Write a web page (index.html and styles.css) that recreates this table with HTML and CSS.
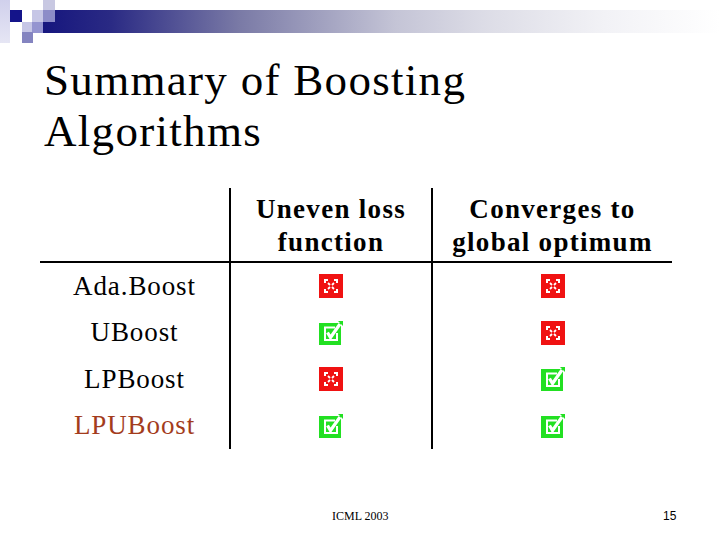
FILE: index.html
```html
<!DOCTYPE html>
<html>
<head>
<meta charset="utf-8">
<link rel="stylesheet" href="styles.css">
</head>
<body>
<div class="slide">
  <svg class="deco" width="720" height="44" viewBox="0 0 720 44">
    <defs>
      <linearGradient id="bar" x1="43" y1="0" x2="720" y2="0" gradientUnits="userSpaceOnUse">
        <stop offset="0" stop-color="#16167e"/>
        <stop offset="0.1" stop-color="#2a2a84"/>
        <stop offset="0.29" stop-color="#7a7aa6"/>
        <stop offset="0.52" stop-color="#c4c4d6"/>
        <stop offset="0.65" stop-color="#dcdce6"/>
        <stop offset="0.83" stop-color="#f2f2f6"/>
        <stop offset="1" stop-color="#ffffff"/>
      </linearGradient>
      <linearGradient id="strip" x1="0" y1="0" x2="0" y2="1">
        <stop offset="0" stop-color="#d0d0ec"/>
        <stop offset="1" stop-color="#e6e6f4"/>
      </linearGradient>
    </defs>
    <rect x="0" y="0" width="10" height="43" fill="url(#strip)"/>
    <rect x="43" y="10" width="677" height="23" fill="url(#bar)"/>
    <rect x="43" y="0" width="12" height="10" fill="#c8c8e2"/>
    <rect x="10" y="10" width="12" height="12" fill="#14148a"/>
    <rect x="32" y="10" width="11" height="12" fill="#c6c6e6"/>
    <rect x="43" y="10" width="12" height="12" fill="#8c8cc8"/>
    <rect x="22" y="22" width="10" height="10" fill="#c6c6e6"/>
    <rect x="32" y="22" width="11" height="11" fill="#9494d0"/>
    <rect x="22" y="32" width="11" height="11" fill="#8484c0"/>
  </svg>

  <h1 class="title">Summary of Boosting<br>Algorithms</h1>

  <div class="table">
    <div class="cell head empty"></div>
    <div class="cell head mid">Uneven loss<br>function</div>
    <div class="cell head">Converges to<br>global optimum</div>

    <div class="cell label">Ada.Boost</div>
    <div class="cell mid"><svg class="ico" viewBox="0 0 24 24"><use href="#no"/></svg></div>
    <div class="cell"><svg class="ico" viewBox="0 0 24 24"><use href="#no"/></svg></div>

    <div class="cell label">UBoost</div>
    <div class="cell mid"><svg class="ico" viewBox="0 0 24 24"><use href="#yes"/></svg></div>
    <div class="cell"><svg class="ico" viewBox="0 0 24 24"><use href="#no"/></svg></div>

    <div class="cell label">LPBoost</div>
    <div class="cell mid"><svg class="ico" viewBox="0 0 24 24"><use href="#no"/></svg></div>
    <div class="cell"><svg class="ico" viewBox="0 0 24 24"><use href="#yes"/></svg></div>

    <div class="cell label accent">LPUBoost</div>
    <div class="cell mid"><svg class="ico" viewBox="0 0 24 24"><use href="#yes"/></svg></div>
    <div class="cell"><svg class="ico" viewBox="0 0 24 24"><use href="#yes"/></svg></div>
  </div>

  <div class="footer">
    <span class="conf">ICML 2003</span>
    <span class="num">15</span>
  </div>

  <svg width="0" height="0" class="defs">
    <defs>
      <g id="no">
        <rect x="0" y="0" width="24" height="24" fill="#f01212"/>
        <path d="M6 9 L6 6 L9 6 M15 6 L18 6 L18 9 M18 15 L18 18 L15 18 M9 18 L6 18 L6 15" fill="none" stroke="#fff" stroke-width="2"/>
        <path d="M9 9 L11 11 M15 9 L13 11 M9 15 L11 13 M15 15 L13 13" stroke="#fff" stroke-width="1.8" fill="none"/>
      </g>
      <g id="yes">
        <rect x="0" y="2" width="22" height="22" fill="#22e022"/>
        <path d="M19 0 L24 0 L24 5 Z" fill="#22e022"/>
        <path d="M16 6.5 L6 6.5 L6 19 L18 19 L18 12" fill="none" stroke="#fff" stroke-width="2"/>
        <path d="M8.5 11.5 L11.5 16.5 L21 3" fill="none" stroke="#fff" stroke-width="3.2"/>
      </g>
    </defs>
  </svg>
</div>
</body>
</html>
```

FILE: styles.css
```css
html, body {
  margin: 0;
  padding: 0;
  background: #ffffff;
}

.slide {
  width: 720px;
  height: 540px;
  position: relative;
  overflow: hidden;
  font-family: "Liberation Serif", "Times New Roman", serif;
  color: #000;
}

.deco {
  display: block;
}

.defs {
  position: absolute;
  width: 0;
  height: 0;
}

.title {
  margin: 11px 0 0 44px;
  font-weight: normal;
  font-size: 45px;
  line-height: 51px;
  letter-spacing: 1.3px;
}

.table {
  margin: 31px 0 0 40px;
  width: 632px;
  display: grid;
  grid-template-columns: 189px 204px 239px;
  grid-template-rows: 75px repeat(4, 46.5px);
}

.cell {
  display: flex;
  align-items: center;
  justify-content: center;
}

.mid {
  border-left: 2px solid #000;
  border-right: 2px solid #000;
}

.head {
  border-bottom: 2px solid #000;
  font-weight: bold;
  font-size: 27px;
  line-height: 33px;
  letter-spacing: 1.3px;
  text-align: center;
  align-items: flex-start;
  padding-top: 5px;
  box-sizing: border-box;
}

.label {
  font-size: 27px;
  letter-spacing: 0.9px;
}

.accent {
  color: #a33c1c;
}

.ico {
  width: 24px;
  height: 24px;
  display: block;
}

.footer {
  margin-top: 60px;
  position: relative;
  height: 16px;
}

.conf {
  position: absolute;
  left: 332px;
  top: 0;
  font-size: 12px;
}

.num {
  position: absolute;
  left: 663px;
  top: 0;
  font-family: "Liberation Sans", Arial, sans-serif;
  font-size: 12px;
}
```
